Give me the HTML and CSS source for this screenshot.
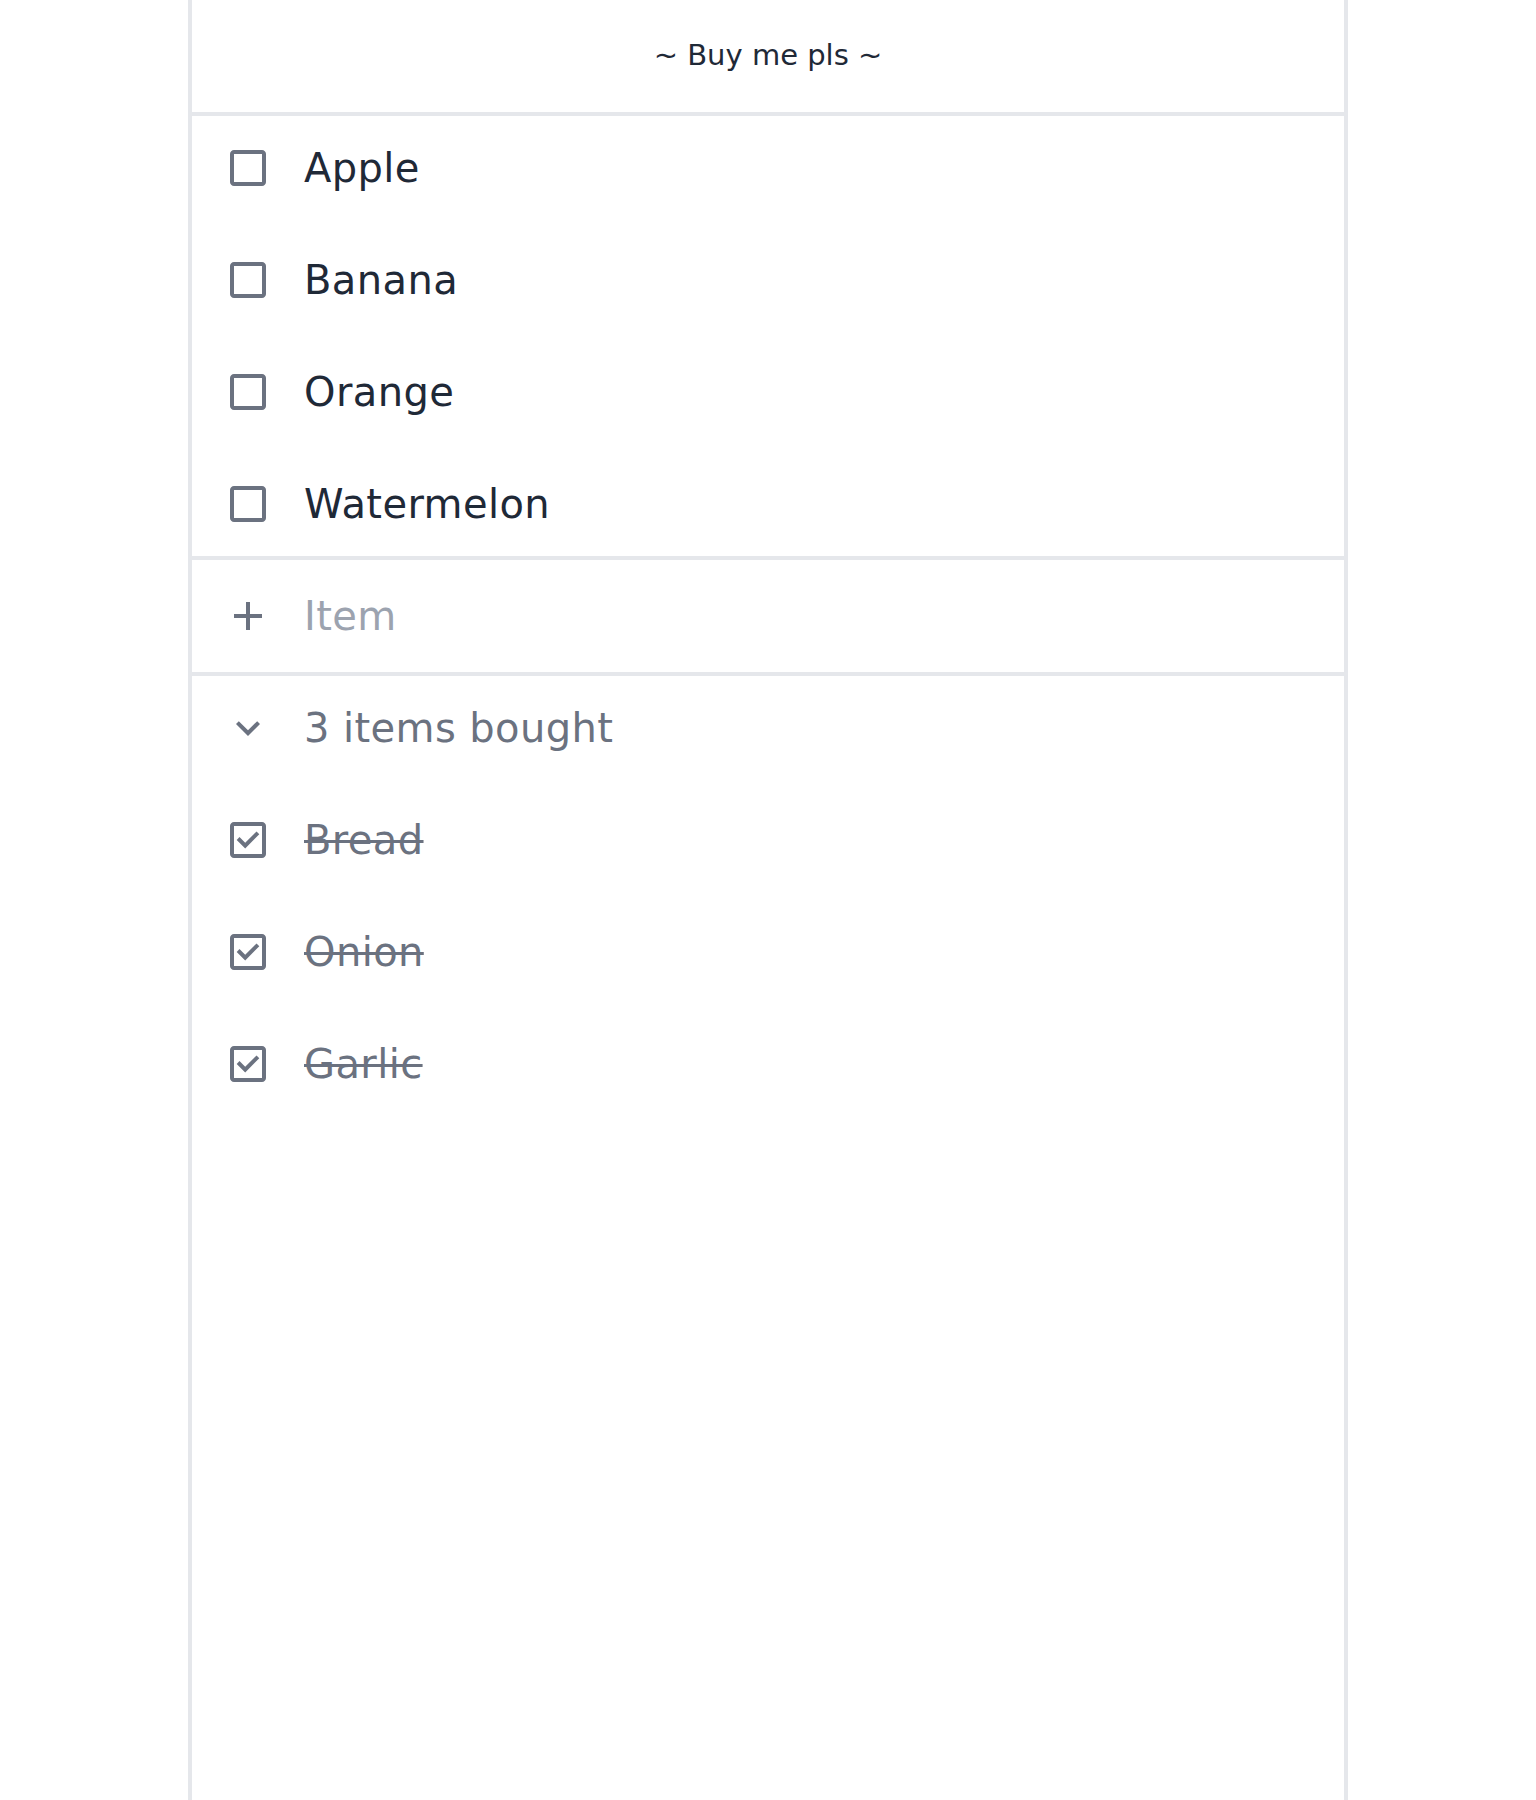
FILE: index.html
```html
<!DOCTYPE html>
<html lang="en">
<head>
<meta charset="utf-8">
<title>Buy me pls</title>
<link rel="stylesheet" href="styles.css">
</head>
<body>
<main class="sheet">
  <header class="sheet-header">~ Buy me pls ~</header>

  <section class="list">
    <div class="row">
      <svg class="icon" viewBox="0 -960 960 960"><path d="M200-120q-33 0-56.5-23.5T120-200v-560q0-33 23.5-56.5T200-840h560q33 0 56.5 23.5T840-760v560q0 33-23.5 56.5T760-120H200Zm0-80h560v-560H200v560Z"/></svg>
      <span class="label">Apple</span>
    </div>
    <div class="row">
      <svg class="icon" viewBox="0 -960 960 960"><path d="M200-120q-33 0-56.5-23.5T120-200v-560q0-33 23.5-56.5T200-840h560q33 0 56.5 23.5T840-760v560q0 33-23.5 56.5T760-120H200Zm0-80h560v-560H200v560Z"/></svg>
      <span class="label">Banana</span>
    </div>
    <div class="row">
      <svg class="icon" viewBox="0 -960 960 960"><path d="M200-120q-33 0-56.5-23.5T120-200v-560q0-33 23.5-56.5T200-840h560q33 0 56.5 23.5T840-760v560q0 33-23.5 56.5T760-120H200Zm0-80h560v-560H200v560Z"/></svg>
      <span class="label">Orange</span>
    </div>
    <div class="row">
      <svg class="icon" viewBox="0 -960 960 960"><path d="M200-120q-33 0-56.5-23.5T120-200v-560q0-33 23.5-56.5T200-840h560q33 0 56.5 23.5T840-760v560q0 33-23.5 56.5T760-120H200Zm0-80h560v-560H200v560Z"/></svg>
      <span class="label">Watermelon</span>
    </div>
  </section>

  <section class="add">
    <div class="row row-add">
      <svg class="icon" viewBox="0 0 24 24"><path d="M19 13h-6v6h-2v-6H5v-2h6V5h2v6h6v2z"/></svg>
      <span class="label placeholder">Item</span>
    </div>
  </section>

  <section class="list">
    <div class="row">
      <svg class="icon" viewBox="0 0 24 24"><path d="M16.59 8.59L12 13.17 7.41 8.59 6 10l6 6 6-6z"/></svg>
      <span class="label muted">3 items bought</span>
    </div>
    <div class="row">
      <svg class="icon" viewBox="0 -960 960 960"><path d="m424-312 282-282-56-56-226 226-114-114-56 56 170 170ZM200-120q-33 0-56.5-23.5T120-200v-560q0-33 23.5-56.5T200-840h560q33 0 56.5 23.5T840-760v560q0 33-23.5 56.5T760-120H200Zm0-80h560v-560H200v560Z"/></svg>
      <span class="label done">Bread</span>
    </div>
    <div class="row">
      <svg class="icon" viewBox="0 -960 960 960"><path d="m424-312 282-282-56-56-226 226-114-114-56 56 170 170ZM200-120q-33 0-56.5-23.5T120-200v-560q0-33 23.5-56.5T200-840h560q33 0 56.5 23.5T840-760v560q0 33-23.5 56.5T760-120H200Zm0-80h560v-560H200v560Z"/></svg>
      <span class="label done">Onion</span>
    </div>
    <div class="row">
      <svg class="icon" viewBox="0 -960 960 960"><path d="m424-312 282-282-56-56-226 226-114-114-56 56 170 170ZM200-120q-33 0-56.5-23.5T120-200v-560q0-33 23.5-56.5T200-840h560q33 0 56.5 23.5T840-760v560q0 33-23.5 56.5T760-120H200Zm0-80h560v-560H200v560Z"/></svg>
      <span class="label done">Garlic</span>
    </div>
  </section>
</main>
</body>
</html>
```

FILE: styles.css
```css
html, body {
  margin: 0;
  padding: 0;
  background: #ffffff;
}

body {
  font-family: "DejaVu Sans", "Noto Sans", sans-serif;
  color: #1f2937;
}

.sheet {
  box-sizing: border-box;
  width: 1160px;
  min-height: 1800px;
  margin: 0 auto;
  border-left: 4px solid #e5e7eb;
  border-right: 4px solid #e5e7eb;
  display: flex;
  flex-direction: column;
}

.sheet-header {
  height: 110px;
  padding-bottom: 2px;
  border-bottom: 4px solid #e5e7eb;
  display: flex;
  align-items: center;
  justify-content: center;
  font-size: 29px;
  color: #1f2937;
}

.list {
  display: flex;
  flex-direction: column;
  gap: 8px;
}

.add {
  border-top: 4px solid #e5e7eb;
  border-bottom: 4px solid #e5e7eb;
}

.row {
  height: 104px;
  display: flex;
  align-items: center;
  gap: 32px;
  padding-left: 32px;
}

.row-add {
  height: 112px;
}

.icon {
  width: 48px;
  height: 48px;
  flex: none;
  fill: #6b7280;
}

.label {
  font-size: 40px;
  line-height: 1.2;
  letter-spacing: 0.4px;
  color: #1f2937;
}

.placeholder {
  color: #9ca3af;
}

.muted {
  color: #6b7280;
}

.done {
  color: #6b7280;
  text-decoration: line-through;
  text-decoration-thickness: 3px;
}
```
